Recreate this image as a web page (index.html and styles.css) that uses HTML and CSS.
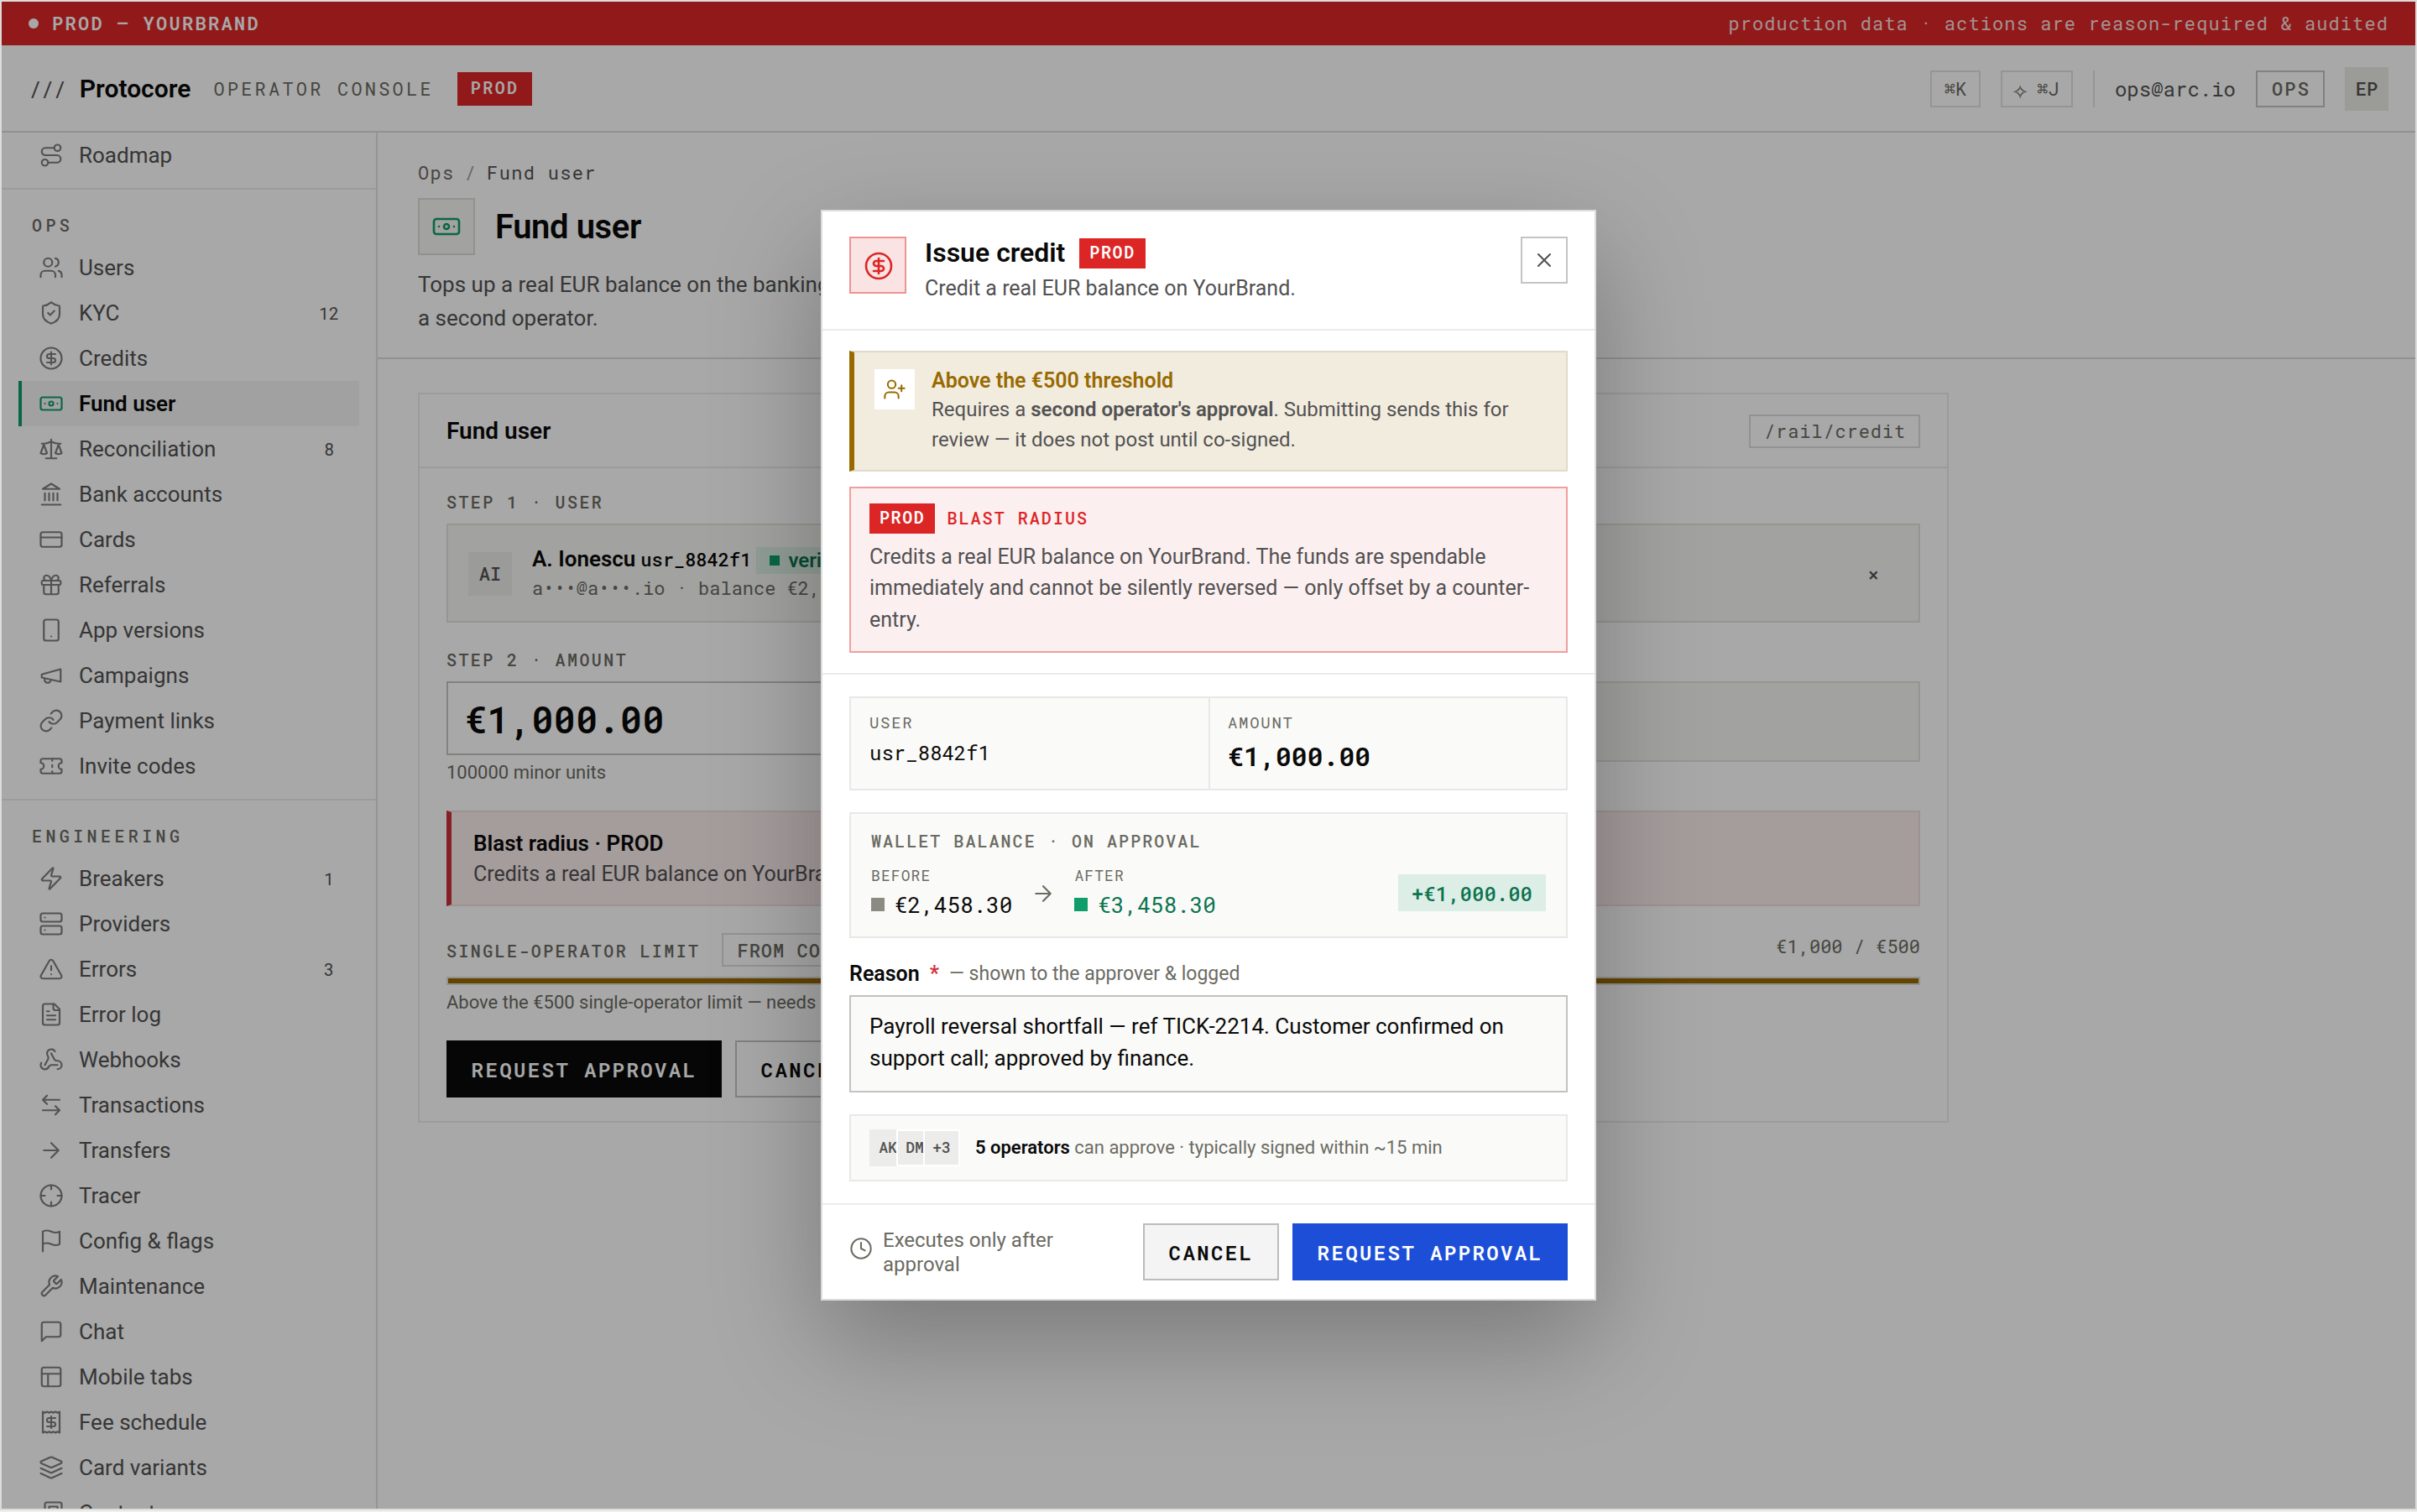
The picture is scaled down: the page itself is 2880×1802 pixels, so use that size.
FILE: index.html
```html
<!DOCTYPE html>
<html lang="en">
<head>
<meta charset="utf-8">
<title>Protocore operator console</title>
<link rel="stylesheet" href="styles.css">
</head>
<body>
<svg class="sprite" aria-hidden="true">
  <symbol id="route" viewBox="0 0 24 24"><circle cx="6" cy="19" r="3"/><path d="M9 19h8.5a3.5 3.5 0 0 0 0-7h-11a3.5 3.5 0 0 1 0-7H15"/><circle cx="18" cy="5" r="3"/></symbol>
  <symbol id="users" viewBox="0 0 24 24"><path d="M16 21v-2a4 4 0 0 0-4-4H6a4 4 0 0 0-4 4v2"/><circle cx="9" cy="7" r="4"/><path d="M22 21v-2a4 4 0 0 0-3-3.87M16 3.13a4 4 0 0 1 0 7.75"/></symbol>
  <symbol id="shield" viewBox="0 0 24 24"><path d="M20 13c0 5-3.5 7.5-7.66 8.95a1 1 0 0 1-.67-.01C7.5 20.5 4 18 4 13V6a1 1 0 0 1 1-1c2 0 4.5-1.2 6.24-2.72a1.17 1.17 0 0 1 1.52 0C14.51 3.81 17 5 19 5a1 1 0 0 1 1 1z"/><path d="m9 12 2 2 4-4"/></symbol>
  <symbol id="dollar" viewBox="0 0 24 24"><circle cx="12" cy="12" r="10"/><path d="M16 8h-6a2 2 0 1 0 0 4h4a2 2 0 1 1 0 4H8M12 18V6"/></symbol>
  <symbol id="banknote" viewBox="0 0 24 24"><rect x="2" y="6" width="20" height="12" rx="2"/><circle cx="12" cy="12" r="2"/><path d="M6 12h.01M18 12h.01"/></symbol>
  <symbol id="scale" viewBox="0 0 24 24"><path d="m16 16 3-8 3 8c-.87.65-1.92 1-3 1s-2.13-.35-3-1Z"/><path d="m2 16 3-8 3 8c-.87.65-1.92 1-3 1s-2.13-.35-3-1Z"/><path d="M7 21h10M12 3v18M3 7h2c2 0 5-1 7-2 2 1 5 2 7 2h2"/></symbol>
  <symbol id="landmark" viewBox="0 0 24 24"><path d="M3 22h18M6 18v-7M10 18v-7M14 18v-7M18 18v-7"/><path d="m12 2 8 5H4Z"/></symbol>
  <symbol id="card" viewBox="0 0 24 24"><rect x="2" y="5" width="20" height="14" rx="2"/><path d="M2 10h20"/></symbol>
  <symbol id="gift" viewBox="0 0 24 24"><rect x="3" y="8" width="18" height="4" rx="1"/><path d="M12 8v13M19 12v7a2 2 0 0 1-2 2H7a2 2 0 0 1-2-2v-7M7.5 8a2.5 2.5 0 0 1 0-5A4.8 8 0 0 1 12 8a4.8 8 0 0 1 4.5-5 2.5 2.5 0 0 1 0 5"/></symbol>
  <symbol id="phone" viewBox="0 0 24 24"><rect x="5" y="2" width="14" height="20" rx="2"/><path d="M12 18h.01"/></symbol>
  <symbol id="megaphone" viewBox="0 0 24 24"><path d="m3 11 18-5v12L3 14v-3z"/><path d="M11.6 16.8a3 3 0 1 1-5.8-1.6"/></symbol>
  <symbol id="link" viewBox="0 0 24 24"><path d="M10 13a5 5 0 0 0 7.54.54l3-3a5 5 0 0 0-7.07-7.07l-1.72 1.71"/><path d="M14 11a5 5 0 0 0-7.54-.54l-3 3a5 5 0 0 0 7.07 7.07l1.71-1.71"/></symbol>
  <symbol id="ticket" viewBox="0 0 24 24"><path d="M2 9a3 3 0 0 1 0 6v2a2 2 0 0 0 2 2h16a2 2 0 0 0 2-2v-2a3 3 0 0 1 0-6V7a2 2 0 0 0-2-2H4a2 2 0 0 0-2 2Z"/><path d="M13 5v2M13 17v2M13 11v2"/></symbol>
  <symbol id="zap" viewBox="0 0 24 24"><path d="M4 14a1 1 0 0 1-.78-1.63l9.9-10.2a.5.5 0 0 1 .86.46l-1.92 6.02A1 1 0 0 0 13 10h7a1 1 0 0 1 .78 1.63l-9.9 10.2a.5.5 0 0 1-.86-.46l1.92-6.02A1 1 0 0 0 11 14z"/></symbol>
  <symbol id="server" viewBox="0 0 24 24"><rect x="2" y="2" width="20" height="8" rx="2"/><rect x="2" y="14" width="20" height="8" rx="2"/><path d="M6 6h.01M6 18h.01"/></symbol>
  <symbol id="alert" viewBox="0 0 24 24"><path d="m21.73 18-8-14a2 2 0 0 0-3.48 0l-8 14A2 2 0 0 0 4 21h16a2 2 0 0 0 1.73-3"/><path d="M12 9v4M12 17h.01"/></symbol>
  <symbol id="file" viewBox="0 0 24 24"><path d="M15 2H6a2 2 0 0 0-2 2v16a2 2 0 0 0 2 2h12a2 2 0 0 0 2-2V7Z"/><path d="M14 2v4a2 2 0 0 0 2 2h4M10 9H8M16 13H8M16 17H8"/></symbol>
  <symbol id="webhook" viewBox="0 0 24 24"><path d="M18 16.98h-5.99c-1.1 0-1.95.94-2.48 1.9A4 4 0 0 1 2 17c.01-.7.2-1.4.57-2"/><path d="m6 17 3.13-5.78c.53-.97.1-2.18-.5-3.1a4 4 0 1 1 6.89-4.06"/><path d="m12 6 3.13 5.73C15.66 12.7 16.9 13 18 13a4 4 0 0 1 0 8"/></symbol>
  <symbol id="swap" viewBox="0 0 24 24"><path d="M8 3 4 7l4 4M4 7h16M16 21l4-4-4-4M20 17H4"/></symbol>
  <symbol id="arrow" viewBox="0 0 24 24"><path d="M5 12h14M12 5l7 7-7 7"/></symbol>
  <symbol id="crosshair" viewBox="0 0 24 24"><circle cx="12" cy="12" r="10"/><path d="M22 12h-4M6 12H2M12 6V2M12 22v-4"/></symbol>
  <symbol id="flag" viewBox="0 0 24 24"><path d="M4 15s1-1 4-1 5 2 8 2 4-1 4-1V3s-1 1-4 1-5-2-8-2-4 1-4 1zM4 22v-7"/></symbol>
  <symbol id="wrench" viewBox="0 0 24 24"><path d="M14.7 6.3a1 1 0 0 0 0 1.4l1.6 1.6a1 1 0 0 0 1.4 0l3.77-3.77a6 6 0 0 1-7.94 7.94l-6.91 6.91a2.12 2.12 0 0 1-3-3l6.91-6.91a6 6 0 0 1 7.94-7.94l-3.76 3.76z"/></symbol>
  <symbol id="chat" viewBox="0 0 24 24"><path d="M21 15a2 2 0 0 1-2 2H7l-4 4V5a2 2 0 0 1 2-2h14a2 2 0 0 1 2 2z"/></symbol>
  <symbol id="panels" viewBox="0 0 24 24"><rect x="3" y="3" width="18" height="18" rx="2"/><path d="M3 9h18M9 21V9"/></symbol>
  <symbol id="receipt" viewBox="0 0 24 24"><path d="M4 2v20l2-1 2 1 2-1 2 1 2-1 2 1 2-1 2 1V2l-2 1-2-1-2 1-2-1-2 1-2-1-2 1Z"/><path d="M16 8h-6a2 2 0 1 0 0 4h4a2 2 0 1 1 0 4H8M12 17.5v-11"/></symbol>
  <symbol id="layers" viewBox="0 0 24 24"><path d="M12.83 2.18a2 2 0 0 0-1.66 0L2.6 6.08a1 1 0 0 0 0 1.83l8.58 3.91a2 2 0 0 0 1.66 0l8.58-3.9a1 1 0 0 0 0-1.83Z"/><path d="m22 17.65-9.17 4.16a2 2 0 0 1-1.66 0L2 17.65M22 12.65l-9.17 4.16a2 2 0 0 1-1.66 0L2 12.65"/></symbol>
  <symbol id="news" viewBox="0 0 24 24"><path d="M4 22h16a2 2 0 0 0 2-2V4a2 2 0 0 0-2-2H8a2 2 0 0 0-2 2v16a2 2 0 0 1-2 2Zm0 0a2 2 0 0 1-2-2v-9c0-1.1.9-2 2-2h2M18 14h-8M15 18h-5M10 6h8v4h-8V6Z"/></symbol>
  <symbol id="user-plus" viewBox="0 0 24 24"><path d="M16 21v-2a4 4 0 0 0-4-4H6a4 4 0 0 0-4 4v2"/><circle cx="9" cy="7" r="4"/><path d="M19 8v6M22 11h-6"/></symbol>
  <symbol id="close" viewBox="0 0 24 24"><path d="M18 6 6 18M6 6l12 12"/></symbol>
  <symbol id="clock" viewBox="0 0 24 24"><circle cx="12" cy="12" r="10"/><path d="M12 6v6l4 2"/></symbol>
</svg>

<div class="frame">
  <div class="envbar"><span class="envbar-dot"></span><b>PROD — YOURBRAND</b><span class="envbar-note">production data · actions are reason-required &amp; audited</span></div>

  <header class="topbar">
    <span class="slashes">///</span>
    <span class="brand">Protocore</span>
    <span class="product">OPERATOR CONSOLE</span>
    <span class="env-badge">PROD</span>
    <div class="topbar-right">
      <span class="key key-k">⌘K</span>
      <span class="key key-j"><span class="spark">✧</span> ⌘J</span>
      <span class="rule"></span>
      <span class="email">ops@arc.io</span>
      <span class="role">OPS</span>
      <span class="me">EP</span>
    </div>
  </header>

  <div class="shell">
    <nav class="sidebar">
      <section class="group group-top">
        <a class="item"><svg class="icon"><use href="#route"/></svg>Roadmap</a>
      </section>
      <section class="group">
        <h4>OPS</h4>
        <a class="item"><svg class="icon"><use href="#users"/></svg>Users</a>
        <a class="item"><svg class="icon"><use href="#shield"/></svg>KYC<i>12</i></a>
        <a class="item"><svg class="icon"><use href="#dollar"/></svg>Credits</a>
        <a class="item active"><svg class="icon"><use href="#banknote"/></svg>Fund user</a>
        <a class="item"><svg class="icon"><use href="#scale"/></svg>Reconciliation<i>8</i></a>
        <a class="item"><svg class="icon"><use href="#landmark"/></svg>Bank accounts</a>
        <a class="item"><svg class="icon"><use href="#card"/></svg>Cards</a>
        <a class="item"><svg class="icon"><use href="#gift"/></svg>Referrals</a>
        <a class="item"><svg class="icon"><use href="#phone"/></svg>App versions</a>
        <a class="item"><svg class="icon"><use href="#megaphone"/></svg>Campaigns</a>
        <a class="item"><svg class="icon"><use href="#link"/></svg>Payment links</a>
        <a class="item"><svg class="icon"><use href="#ticket"/></svg>Invite codes</a>
      </section>
      <section class="group">
        <h4>ENGINEERING</h4>
        <a class="item"><svg class="icon"><use href="#zap"/></svg>Breakers<i>1</i></a>
        <a class="item"><svg class="icon"><use href="#server"/></svg>Providers</a>
        <a class="item"><svg class="icon"><use href="#alert"/></svg>Errors<i>3</i></a>
        <a class="item"><svg class="icon"><use href="#file"/></svg>Error log</a>
        <a class="item"><svg class="icon"><use href="#webhook"/></svg>Webhooks</a>
        <a class="item"><svg class="icon"><use href="#swap"/></svg>Transactions</a>
        <a class="item"><svg class="icon"><use href="#arrow"/></svg>Transfers</a>
        <a class="item"><svg class="icon"><use href="#crosshair"/></svg>Tracer</a>
        <a class="item"><svg class="icon"><use href="#flag"/></svg>Config &amp; flags</a>
        <a class="item"><svg class="icon"><use href="#wrench"/></svg>Maintenance</a>
        <a class="item"><svg class="icon"><use href="#chat"/></svg>Chat</a>
        <a class="item"><svg class="icon"><use href="#panels"/></svg>Mobile tabs</a>
        <a class="item"><svg class="icon"><use href="#receipt"/></svg>Fee schedule</a>
        <a class="item"><svg class="icon"><use href="#layers"/></svg>Card variants</a>
        <a class="item"><svg class="icon"><use href="#news"/></svg>Content</a>
      </section>
    </nav>

    <main class="main">
      <div class="page-head">
        <div class="crumbs"><span>Ops</span><span class="sep">/</span><span class="here">Fund user</span></div>
        <div class="page-title"><span class="page-icon"><svg class="icon"><use href="#banknote"/></svg></span><h1>Fund user</h1></div>
        <p>Tops up a real EUR balance on the banking rail.<br>a second operator.</p>
      </div>

      <div class="card">
        <div class="card-head"><h2>Fund user</h2><span class="tag">/rail/credit</span></div>
        <div class="card-body">
          <div class="step">STEP 1 · USER</div>
          <div class="picked">
            <span class="avatar">AI</span>
            <div class="picked-text">
              <div class="picked-name"><b>A. Ionescu</b><code>usr_8842f1</code><span class="verified"><span class="sq"></span>verified</span></div>
              <div class="picked-meta">a•••@a•••.io · balance €2,458.30</div>
            </div>
            <span class="picked-clear">×</span>
          </div>
          <div class="step step-2">STEP 2 · AMOUNT</div>
          <div class="amount-row">
            <div><div class="amount-input">€1,000.00</div><div class="hint">100000 minor units</div></div>
            <div class="amount-side"></div>
          </div>
          <div class="blast"><b>Blast radius · PROD</b><p>Credits a real EUR balance on YourBrand.</p></div>
          <div class="limit-row"><span class="step limit-label">SINGLE-OPERATOR LIMIT</span><span class="tag">FROM CONFIG</span><span class="limit-value">€1,000 / €500</span></div>
          <div class="meter"><div class="meter-fill"></div></div>
          <div class="limit-note">Above the €500 single-operator limit — needs approval.</div>
          <div class="actions"><span class="btn btn-dark">REQUEST APPROVAL</span><span class="btn btn-plain">CANCEL</span></div>
        </div>
      </div>
    </main>
  </div>

  <div class="overlay">
    <div class="modal">
      <div class="modal-head">
        <span class="modal-icon"><svg class="icon"><use href="#dollar"/></svg></span>
        <div class="modal-titles">
          <div class="modal-title"><h3>Issue credit</h3><span class="badge">PROD</span></div>
          <p>Credit a real EUR balance on YourBrand.</p>
        </div>
        <span class="modal-close"><svg class="icon"><use href="#close"/></svg></span>
      </div>

      <div class="notices">
        <div class="warn">
          <span class="warn-icon"><svg class="icon"><use href="#user-plus"/></svg></span>
          <div>
            <b class="warn-title">Above the €500 threshold</b>
            <p>Requires a <b>second operator's approval</b>. Submitting sends this for<br>review — it does not post until co-signed.</p>
          </div>
        </div>
        <div class="danger">
          <div class="danger-head"><span class="badge">PROD</span><span class="danger-label">BLAST RADIUS</span></div>
          <p>Credits a real EUR balance on YourBrand. The funds are spendable<br>immediately and cannot be silently reversed — only offset by a counter-<br>entry.</p>
        </div>
      </div>

      <div class="modal-body">
        <div class="facts">
          <div class="fact"><span class="fact-label">USER</span><span class="fact-user">usr_8842f1</span></div>
          <div class="fact"><span class="fact-label">AMOUNT</span><span class="fact-amount">€1,000.00</span></div>
        </div>
        <div class="wallet">
          <div class="wallet-label">WALLET BALANCE · ON APPROVAL</div>
          <div class="wallet-row">
            <div><div class="wallet-cap">BEFORE</div><div class="wallet-val"><span class="sq"></span>€2,458.30</div></div>
            <svg class="icon wallet-arrow"><use href="#arrow"/></svg>
            <div><div class="wallet-cap">AFTER</div><div class="wallet-val after"><span class="sq"></span>€3,458.30</div></div>
            <span class="delta">+€1,000.00</span>
          </div>
        </div>
        <div class="reason-label"><b>Reason</b><span class="star">*</span><span class="reason-hint">— shown to the approver &amp; logged</span></div>
        <div class="reason">Payroll reversal shortfall — ref TICK-2214. Customer confirmed on<br>support call; approved by finance.</div>
        <div class="approvers">
          <div class="stack"><span>AK</span><span>DM</span><span>+3</span></div>
          <div class="approvers-text"><b>5 operators</b> can approve · typically signed within ~15 min</div>
        </div>
      </div>

      <div class="modal-foot">
        <svg class="icon"><use href="#clock"/></svg>
        <span class="foot-note">Executes only after<br>approval</span>
        <span class="btn btn-cancel">CANCEL</span>
        <span class="btn btn-primary">REQUEST APPROVAL</span>
      </div>
    </div>
  </div>
</div>
</body>
</html>
```
FILE: styles.css
```css
:root {
  --sans: Roboto, "Liberation Sans", sans-serif;
  --mono: "Roboto Mono", "DejaVu Sans Mono", monospace;
  --ink: #0a0a0a;
  --body: #525252;
  --muted: #6b6b63;
  --red: #dc2626;
  --green: #0f9d6c;
  --amber: #986a00;
}
* { box-sizing: border-box; }
body { margin: 0; background: #f0f0ec; font-family: var(--sans); color: var(--ink); }
h1, h2, h3, h4, p { margin: 0; }
b { font-weight: 600; }
.sprite { position: absolute; width: 0; height: 0; }
.icon { display: block; flex: none; width: 30px; height: 30px; fill: none; stroke: currentColor; stroke-width: 1.75; stroke-linecap: round; stroke-linejoin: round; }

.frame { position: relative; height: 1800px; border: 2px solid #dcdcdc; background: #fff; display: flex; flex-direction: column; overflow: hidden; white-space: nowrap; }

.envbar { flex: none; height: 52px; padding: 0 32px; background: var(--red); color: #fff; display: flex; align-items: center; font: 22px/52px var(--mono); }
.envbar-dot { width: 12px; height: 12px; border-radius: 50%; background: #fff; margin-right: 16px; }
.envbar b { letter-spacing: 2.3px; }
.envbar-note { margin-left: auto; letter-spacing: 1.1px; opacity: .85; }

.topbar { flex: none; height: 104px; padding: 2px 32px 0; border-bottom: 2px solid #dcdcdc; display: flex; align-items: center; }
.slashes { font: 26px/40px var(--mono); color: var(--body); letter-spacing: -1px; }
.brand { font-size: 30px; font-weight: 600; margin-left: 17px; padding-bottom: 2px; }
.product { font: 22px/40px var(--mono); color: var(--muted); letter-spacing: 3.2px; margin-left: 27px; }
.env-badge { margin-left: 28px; height: 40px; padding: 0 16px; background: var(--red); color: #fff; font: 600 20px/37px var(--mono); letter-spacing: 2.4px; }
.topbar-right { margin-left: auto; display: flex; align-items: center; }
.key { height: 44px; border: 2px solid #e2e2e2; font: 22px/40px var(--mono); color: var(--muted); text-align: center; margin-right: 24px; }
.key-k { width: 60px; }
.key-j { width: 86px; display: flex; align-items: center; justify-content: center; gap: 13px; }
.spark { width: 14px; display: flex; justify-content: center; font-size: 32px; line-height: 36px; }
.rule { width: 2px; height: 44px; background: #e2e2e2; margin-right: 24px; }
.email { font: 24px/40px var(--mono); color: var(--body); }
.role { width: 82px; height: 44px; margin: 0 24px; border: 2px solid #c4c4c4; font: 500 22px/40px var(--mono); letter-spacing: 2.2px; text-align: center; text-indent: 2px; color: var(--muted); }
.me { width: 52px; height: 52px; background: #ebebe6; font: 500 22px/52px var(--mono); text-align: center; color: var(--body); }

.shell { flex: 1; min-height: 0; display: flex; }
.sidebar { flex: none; width: 448px; border-right: 2px solid #e2e2e2; overflow: hidden; }
.group { padding: 0 20px 12px; border-bottom: 2px solid #ebebeb; }
.group h4 { height: 66px; padding-left: 16px; font: 500 20px/84px var(--mono); letter-spacing: 4.4px; color: var(--muted); }
.item { height: 54px; border-left: 4px solid transparent; padding: 0 20px; display: flex; align-items: center; gap: 18px; font-size: 26px; color: var(--body); }
.item .icon { color: #7e7e7e; }
.item i { margin-left: auto; width: 32px; text-align: center; font: 20px/54px var(--mono); }
.item.active { background: #f5f5f5; border-color: var(--green); color: var(--ink); font-weight: 600; }
.item.active .icon { color: var(--green); }

.main { flex: 1; min-width: 0; }
.page-head { height: 270px; padding: 34px 48px 0; border-bottom: 2px solid #dcdcdc; }
.crumbs { display: flex; gap: 12px; font: 22px/28px var(--mono); letter-spacing: 1.32px; color: var(--muted); }
.crumbs .sep { color: #a0a09a; }
.crumbs .here { color: var(--body); }
.page-title { margin-top: 16px; display: flex; align-items: center; gap: 24px; }
.page-icon { width: 68px; height: 68px; border: 2px solid #dcdcd6; background: #f6f6f3; color: var(--green); display: flex; align-items: center; justify-content: center; }
.page-icon .icon, .modal-icon .icon { width: 36px; height: 36px; }
.page-title h1 { font-size: 40px; font-weight: 600; letter-spacing: -.4px; }
.page-head p { margin-top: 15px; font-size: 26px; line-height: 40px; color: var(--body); }

.card { width: 1824px; margin: 40px 0 0 48px; border: 2px solid #ebebeb; }
.card-head { height: 88px; padding: 2px 32px 0; border-bottom: 2px solid #ebebeb; display: flex; align-items: center; justify-content: space-between; }
.card-head h2 { font-size: 28px; font-weight: 600; padding-bottom: 1px; }
.tag { height: 40px; padding: 0 15px 0 16px; border: 2px solid #dedede; font: 22px/36px var(--mono); letter-spacing: .88px; color: var(--muted); }
.card-body { padding: 26px 32px 28px; }
.step { font: 500 20px/28px var(--mono); letter-spacing: 2.4px; color: var(--muted); }
.picked { margin-top: 12px; height: 118px; border: 2px solid #e2e2de; background: #f6f6f3; padding: 0 24px; display: flex; align-items: center; }
.avatar { width: 52px; height: 52px; margin-top: 2px; background: #ececea; font: 500 22px/52px var(--mono); text-align: center; color: var(--body); }
.picked-text { margin-left: 24px; }
.picked-name { display: flex; align-items: center; height: 36px; font-size: 26px; }
.picked-name b { padding-bottom: 5px; }
.picked-name code { font: 500 22px/36px var(--mono); margin-left: 6px; padding-bottom: 3px; }
.verified { margin-left: 6px; height: 32px; padding: 0 16px; background: #ddeee6; color: #0b7350; font-weight: 600; font-size: 24px; line-height: 32px; display: flex; align-items: center; gap: 10px; }
.sq { flex: none; width: 12px; height: 12px; background: var(--green); }
.picked-meta { font: 22px/30px var(--mono); color: var(--muted); }
.picked-clear { margin: 3px 0 0 auto; width: 60px; text-align: center; font: 500 22px/40px var(--mono); color: var(--body); }
.step-2 { margin-top: 30px; }
.amount-row { margin-top: 12px; height: 154px; display: grid; grid-template-columns: 1fr 1fr; gap: 32px; }
.amount-input { height: 88px; border: 2px solid #c4c4c2; padding-left: 20px; font: 600 44px/86px var(--mono); }
.hint { margin-top: 6px; font-size: 22px; line-height: 30px; color: var(--muted); }
.amount-side { height: 96px; border: 2px solid #e2e2de; background: #f6f6f3; }
.blast { height: 114px; border: 2px solid #f0dede; border-left: 6px solid #c9303a; background: #fbeded; padding: 19px 26px; font-size: 26px; line-height: 36px; }
.blast b { display: block; }
.blast p { font-size: 25px; line-height: 38px; color: var(--body); }
.limit-row { margin-top: 32px; height: 40px; display: flex; align-items: center; }
.limit-row .tag { margin-left: 26px; font-weight: 500; line-height: 38px; letter-spacing: 1px; }
.limit-label { line-height: 40px; padding-top: 2px; }
.limit-value { margin: 0 0 8px auto; font: 22px/32px var(--mono); color: var(--muted); }
.meter { margin-top: 12px; height: 10px; border: 2px solid #dedede; }
.meter-fill { height: 6px; background: var(--amber); }
.limit-note { margin-top: 6px; font-size: 22px; line-height: 30px; color: var(--muted); }
.actions { margin-top: 30px; display: flex; gap: 16px; }

.btn { height: 68px; border: 2px solid; text-align: center; font: 600 24px/66px var(--mono); letter-spacing: 2.4px; }
.btn-dark { width: 328px; background: var(--ink); border-color: var(--ink); color: #fff; }
.btn-plain { width: 162px; border-color: #c4c4c2; }
.btn-cancel { width: 162px; background: #f4f4f4; border-color: #bcbcbc; margin-left: auto; }
.btn-primary { width: 328px; background: #1d4ed8; border-color: #1d4ed8; color: #fff; margin-left: 16px; }

.overlay { position: absolute; inset: 0; background: rgba(0, 0, 0, .34); display: flex; align-items: center; justify-content: center; }
.modal { width: 924px; height: 1300px; border: 2px solid #dcdcdc; background: #fff; box-shadow: 0 48px 120px rgba(0, 0, 0, .28); }
.modal-head { height: 142px; padding: 30px 32px 0; border-bottom: 2px solid #ebebeb; display: flex; align-items: flex-start; }
.modal-icon { width: 68px; height: 68px; border: 2px solid #ee9292; background: #fae3e3; color: var(--red); display: flex; align-items: center; justify-content: center; padding: 1px 0 0 1px; }
.modal-titles { margin-left: 22px; }
.modal-title { display: flex; align-items: center; gap: 17px; height: 38px; }
.modal-title h3 { font-size: 32px; font-weight: 600; }
.modal-title .badge { margin-top: 2px; }
.badge { height: 36px; padding: 0 12px; background: var(--red); color: #fff; font: 600 20px/33px var(--mono); letter-spacing: 1.6px; }
.modal-titles p { margin-top: 6px; font-size: 25px; line-height: 36px; color: var(--body); }
.modal-close { margin-left: auto; width: 56px; height: 56px; border: 2px solid #c4c4c4; color: var(--body); display: flex; align-items: center; justify-content: center; }
.modal-close .icon, .warn-icon .icon, .modal-foot .icon { width: 28px; height: 28px; }

.notices { height: 410px; padding: 24px 32px 0; border-bottom: 2px solid #ebebeb; }
.warn { height: 144px; border: 2px solid #dfdacb; border-left: 6px solid var(--amber); background: #f2ecdf; padding: 16px 24px; display: flex; gap: 20px; }
.warn-icon { flex: none; width: 48px; height: 48px; margin-top: 4px; background: #fff; color: var(--amber); display: flex; align-items: center; justify-content: center; }
.warn-title { display: block; font-size: 25px; line-height: 34px; padding-top: 1px; color: var(--amber); }
.warn p { margin-top: -1px; font-size: 24px; line-height: 36px; color: var(--body); }
.danger { margin-top: 18px; height: 198px; border: 2px solid #ef9f9f; background: #fceff0; padding: 18px 22px; }
.danger-head { display: flex; gap: 14px; }
.danger-label { height: 36px; font: 500 20px/34px var(--mono); letter-spacing: 2.05px; color: var(--red); }
.danger p { margin-top: 9px; font-size: 25px; line-height: 37.3px; color: var(--body); }

.modal-body { height: 632px; padding: 26px 32px 0; border-bottom: 2px solid #ebebeb; }
.facts { height: 112px; border: 2px solid #e8e8e8; background: #fafaf8; display: grid; grid-template-columns: 426px 1fr; }
.fact { padding: 15px 22px 0; display: flex; flex-direction: column; }
.fact + .fact { border-left: 2px solid #e8e8e8; padding-left: 21px; }
.fact-label { font: 19px/28px var(--mono); letter-spacing: 1.7px; color: var(--muted); }
.fact-user { margin-top: 5px; font: 24px/34px var(--mono); }
.fact-amount { margin-top: 5px; font: 600 32px/42px var(--mono); letter-spacing: -.32px; }
.wallet { margin-top: 26px; height: 150px; border: 2px solid #e8e8e8; background: #fafaf8; padding: 17px 24px 0; }
.wallet-label { font: 500 20px/30px var(--mono); letter-spacing: 2.05px; color: var(--muted); }
.wallet-row { margin-top: 12px; display: flex; align-items: center; }
.wallet-cap { font: 18px/28px var(--mono); letter-spacing: 1.08px; color: var(--muted); }
.wallet-val { font: 26px/42px var(--mono); display: flex; align-items: center; gap: 12px; }
.wallet-val .sq { width: 16px; height: 16px; background: #8b8b84; }
.wallet-val.after { color: #0b7350; }
.wallet-val.after .sq { background: var(--green); }
.wallet-arrow { margin: 2px 22px 0; color: var(--muted); }
.delta { margin-left: auto; height: 44px; padding: 0 16px; background: #ddeee6; color: #0b7350; font: 500 24px/46px var(--mono); }
.reason-label { margin-top: 25px; height: 34px; display: flex; align-items: center; font-size: 25px; }
.star { color: #d03040; font-size: 25px; font-weight: 600; margin-left: 12px; }
.reason-hint { font-size: 23px; color: var(--muted); margin-left: 12px; }
.reason { margin-top: 9px; height: 116px; border: 2px solid #c2c2c0; background: #fafaf8; padding: 16px 22px; font-size: 26px; line-height: 38px; }
.approvers { margin-top: 26px; height: 80px; border: 2px solid #e8e8e8; background: #fafaf8; padding: 0 22px; display: flex; align-items: center; }
.stack { display: flex; }
.stack span { width: 44px; height: 44px; background: #ececea; font: 500 18px/42px var(--mono); text-align: center; color: var(--body); }
.stack span + span { margin-left: -12px; border: 2px solid #fff; line-height: 38px; }
.approvers-text { margin: 0 0 2px 18px; font-size: 22px; color: var(--muted); }
.approvers-text b { color: var(--ink); }

.modal-foot { padding: 22px 32px 0; display: flex; align-items: flex-start; color: var(--muted); }
.modal-foot .icon { margin-top: 16px; }
.foot-note { margin: 6px 0 0 12px; font-size: 24px; line-height: 28.5px; }
.modal-foot .btn-cancel { color: var(--ink); }
```
